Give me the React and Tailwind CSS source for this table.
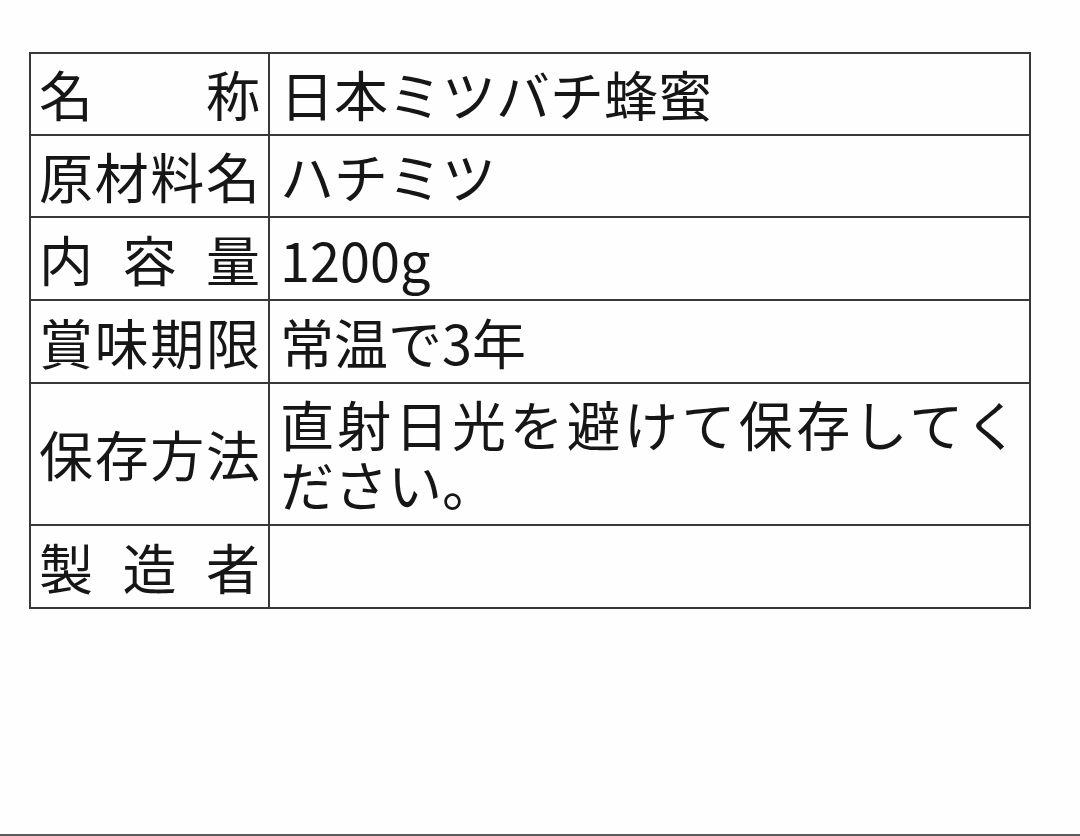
import React from "react";

const font = { fontFamily: '"Noto Sans CJK JP", "Noto Sans", sans-serif' };

function Label({ chars }) {
  return (
    <div className="flex items-center justify-between border-r-2 border-b-2 border-[#383838] px-[8px] text-[54px] leading-[60px]">
      {chars.map((c, i) => (
        <span key={i}>{c}</span>
      ))}
    </div>
  );
}

function Value({ children, tall }) {
  return (
    <div
      className={
        tall
          ? "border-r-2 border-b-2 border-[#383838] px-[10px] pt-[11px] pb-[10px] text-[54px] leading-[60px] text-justify"
          : "border-r-2 border-b-2 border-[#383838] px-[10px] py-[10px] text-[54px] leading-[60px] text-justify"
      }
    >
      {children}
    </div>
  );
}

export default function App() {
  const rows = [
    [["名", "称"], "日本ミツバチ蜂蜜", false],
    [["原", "材", "料", "名"], "ハチミツ", false],
    [["内", "容", "量"], "1200g", true],
    [["賞", "味", "期", "限"], "常温で3年", true],
    [["保", "存", "方", "法"], "直射日光を避けて保存してください。", false],
    [["製", "造", "者"], "", true],
  ];
  return (
    <div className="flex h-[836px] flex-col bg-[#fefefe] text-[#161616]" style={font}>
      <div className="pl-[29px] pt-[52px]">
        <div className="grid w-[1002px] grid-cols-[239px_761px] border-t-2 border-l-2 border-[#383838]">
          {rows.map(([l, v, t], i) => (
            <React.Fragment key={i}>
              <Label chars={l} />
              <Value tall={t}>{v || "\u00a0"}</Value>
            </React.Fragment>
          ))}
        </div>
      </div>
      <div className="mt-auto h-[2px] bg-[#5c5c5c]" />
    </div>
  );
}
